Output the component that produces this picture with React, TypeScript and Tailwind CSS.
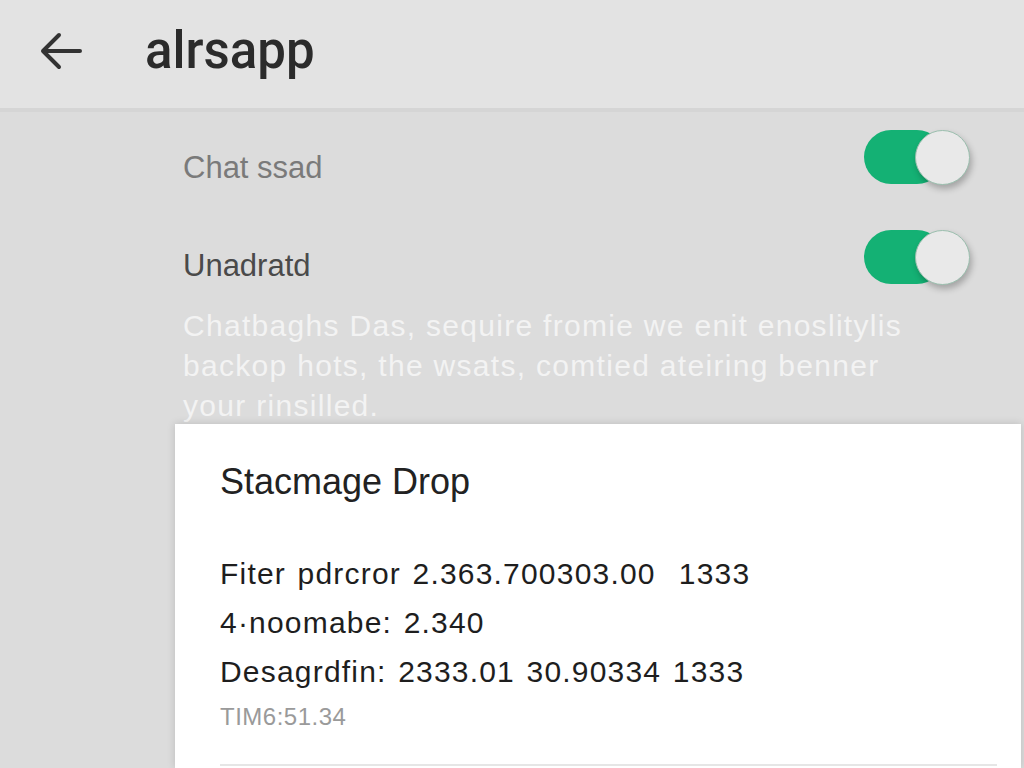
import React from "react";

const Toggle = () => (
  <div className="relative w-[106px] h-[54px] shrink-0">
    <div className="absolute left-0 top-0 w-[80px] h-[54px] rounded-full bg-[#14b174]" />
    <div className="absolute right-0 top-0 w-[55px] h-[55px] rounded-full bg-[#e9e9e9] border border-[#9bbfae] shadow-[2px_4px_6px_rgba(0,0,0,0.25)]" />
  </div>
);

export default function App() {
  return (
    <div
      className="w-[1024px] h-[768px] overflow-hidden bg-[#dcdcdc] flex flex-col"
      style={{ fontFamily: "'Liberation Sans', Arial, sans-serif" }}
    >
      <header className="h-[112px] bg-[#e3e3e3] border-b-[4px] border-[#d5d5d5] flex items-center shrink-0">
        <svg
          className="ml-[40px] mt-[-6px]"
          width="42"
          height="38"
          viewBox="0 0 42 38"
          fill="none"
          stroke="#333"
          strokeWidth="4"
          strokeLinecap="round"
          strokeLinejoin="round"
        >
          <path d="M40 19H3M19 3L3 19l16 16" />
        </svg>
        <h1
          className="ml-[63px] mt-[-6px] text-[51px] font-medium text-[#2b2b2b]"
          style={{ fontFamily: "Roboto, 'Liberation Sans', sans-serif" }}
        >
          alrsapp
        </h1>
      </header>

      <div className="pl-[183px] pr-[54px] pt-[18px]">
        <div className="flex items-center justify-between h-[54px]">
          <span className="pt-[22px] text-[31px] text-[#7a7a7a]">Chat ssad</span>
          <Toggle />
        </div>
        <div className="flex items-center justify-between h-[54px] mt-[46px]">
          <span className="pt-[18px] text-[31px] text-[#4a4a4a]">Unadratd</span>
          <Toggle />
        </div>
        <p className="mt-[22px] text-[30px] leading-[40px] tracking-[1.3px] text-[#f3f3f3] whitespace-nowrap">
          Chatbaghs Das, sequire fromie we enit enoslitylis
          <br />
          backop hots, the wsats, comtied ateiring benner
          <br />
          your rinsilled.
        </p>
      </div>

      <div className="ml-[175px] mr-[3px] mt-[-2px] flex-1 bg-white shadow-[0_0_8px_rgba(0,0,0,0.15)] pl-[45px] pr-[24px] pt-[36px]">
        <h2 className="text-[36px] leading-[44px] text-[#222]">Stacmage Drop</h2>
        <div className="mt-[52px] flex flex-col gap-[13px] text-[30px] leading-[36px] tracking-[1.2px] [word-spacing:2px] text-[#1e1e1e] whitespace-pre">
          <div>Fiter pdrcror 2.363.700303.00  1333</div>
          <div>4·noomabe: 2.340</div>
          <div>Desagrdfin: 2333.01 30.90334 1333</div>
        </div>
        <div className="mt-[12px] text-[24px] leading-[30px] tracking-[0.5px] text-[#9a9a9a]">TIM6:51.34</div>
        <div className="mt-[32px] h-[2px] bg-[#e6e6e6]" />
      </div>
    </div>
  );
}
